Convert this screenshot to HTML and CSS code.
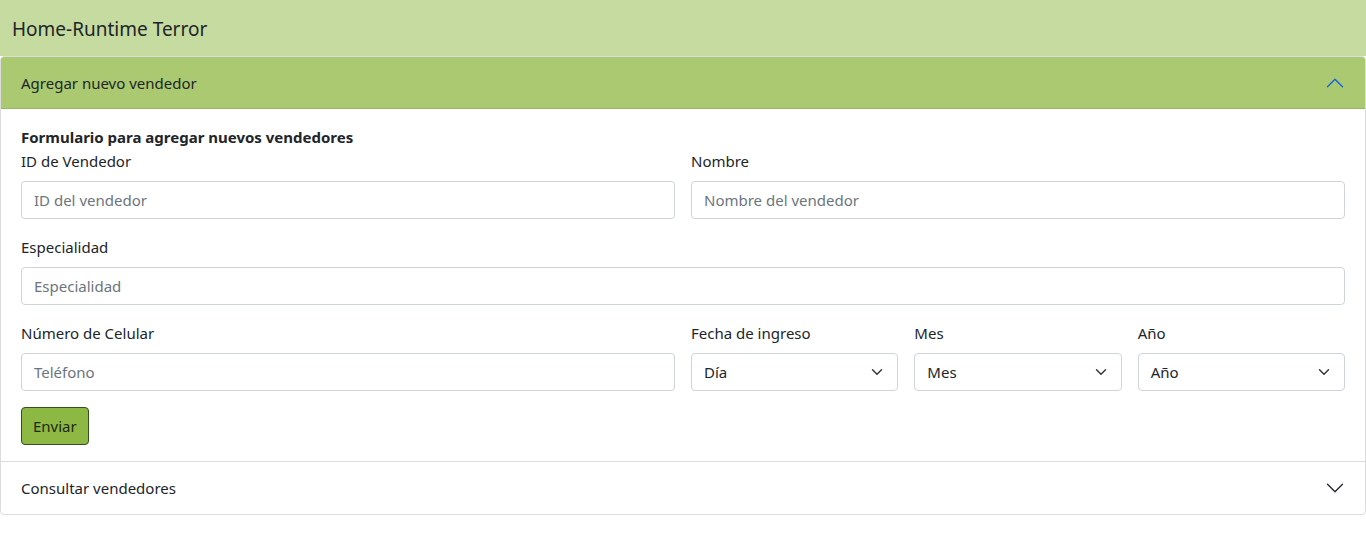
FILE: index.html
```html
<!DOCTYPE html>
<html lang="es">
<head>
<meta charset="utf-8">
<title>Home-Runtime Terror</title>
<link rel="stylesheet" href="styles.css">
</head>
<body>
<header class="topbar">Home-Runtime Terror</header>
<div class="accordion">
  <div class="acc-item">
    <div class="acc-header active">
      <span>Agregar nuevo vendedor</span>
      <svg class="chev up" viewBox="0 0 16 16" width="20" height="20"><path fill="#0c63e4" fill-rule="evenodd" d="M1.646 4.646a.5.5 0 0 1 .708 0L8 10.293l5.646-5.647a.5.5 0 0 1 .708.708l-6 6a.5.5 0 0 1-.708 0l-6-6a.5.5 0 0 1 0-.708z"/></svg>
    </div>
    <div class="acc-body">
      <div class="form-title">Formulario para agregar nuevos vendedores</div>
      <div class="row">
        <div class="field col-6">
          <label>ID de Vendedor</label>
          <input class="input" type="text" placeholder="ID del vendedor">
        </div>
        <div class="field col-6">
          <label>Nombre</label>
          <input class="input" type="text" placeholder="Nombre del vendedor">
        </div>
      </div>
      <div class="row">
        <div class="field col-12">
          <label>Especialidad</label>
          <input class="input" type="text" placeholder="Especialidad">
        </div>
      </div>
      <div class="row">
        <div class="field col-6">
          <label>Número de Celular</label>
          <input class="input" type="text" placeholder="Teléfono">
        </div>
        <div class="field col-2">
          <label>Fecha de ingreso</label>
          <div class="select"><span>Día</span><svg viewBox="0 0 16 16" width="16" height="12"><path fill="none" stroke="#343a40" stroke-linecap="round" stroke-linejoin="round" stroke-width="2" d="M2 5l6 6 6-6"/></svg></div>
        </div>
        <div class="field col-2">
          <label>Mes</label>
          <div class="select"><span>Mes</span><svg viewBox="0 0 16 16" width="16" height="12"><path fill="none" stroke="#343a40" stroke-linecap="round" stroke-linejoin="round" stroke-width="2" d="M2 5l6 6 6-6"/></svg></div>
        </div>
        <div class="field col-2">
          <label>Año</label>
          <div class="select"><span>Año</span><svg viewBox="0 0 16 16" width="16" height="12"><path fill="none" stroke="#343a40" stroke-linecap="round" stroke-linejoin="round" stroke-width="2" d="M2 5l6 6 6-6"/></svg></div>
        </div>
      </div>
      <button class="btn" type="button">Enviar</button>
    </div>
  </div>
  <div class="acc-item">
    <div class="acc-header">
      <span>Consultar vendedores</span>
      <svg class="chev" viewBox="0 0 16 16" width="20" height="20"><path fill="#212529" fill-rule="evenodd" d="M1.646 4.646a.5.5 0 0 1 .708 0L8 10.293l5.646-5.647a.5.5 0 0 1 .708.708l-6 6a.5.5 0 0 1-.708 0l-6-6a.5.5 0 0 1 0-.708z"/></svg>
    </div>
  </div>
</div>
</body>
</html>
```
FILE: styles.css
```css
* { box-sizing: border-box; }
body {
  margin: 0;
  font-family: "Noto Sans", "Open Sans", sans-serif;
  font-size: 15px;
  line-height: 24px;
  color: #212529;
  background: #fff;
}
.topbar {
  height: 56px;
  background: #c5dba0;
  display: flex;
  align-items: center;
  padding: 2px 12px 0;
  font-size: 19px;
}
.accordion {
  border: 1px solid #dcdcdc;
  border-radius: 4px;
}
.acc-item + .acc-item { border-top: 1px solid #dcdcdc; }
.acc-header {
  height: 52px;
  display: flex;
  align-items: center;
  justify-content: space-between;
  padding: 0 20px;
}
.acc-header.active {
  background: #aac970;
  border-bottom: 1px solid #98b762;
  border-radius: 3px 3px 0 0;
}
.chev.up { transform: rotate(180deg); }
.acc-body { padding: 16px 20px; }
.form-title { font-weight: 700; }
.row {
  display: flex;
  gap: 16px;
  margin-bottom: 16px;
}
.col-12 { flex: 1 1 0; }
.col-6 { flex: 0 0 calc((100% - 16px) / 2); }
.col-2 { flex: 1 1 0; }
.field { display: flex; flex-direction: column; }
.field label { margin-bottom: 8px; }
.input, .select {
  height: 38px;
  border: 1px solid #ced4da;
  border-radius: 4px;
  padding: 0 12px;
  font: inherit;
  color: #212529;
  background: #fff;
}
.input::placeholder { color: #6c757d; }
.select {
  display: flex;
  align-items: center;
  justify-content: space-between;
}
.btn {
  height: 38px;
  padding: 0 11px;
  font: inherit;
  background: #8db843;
  border: 1px solid #35501d;
  border-radius: 4px;
  color: #1e2a10;
}
```
